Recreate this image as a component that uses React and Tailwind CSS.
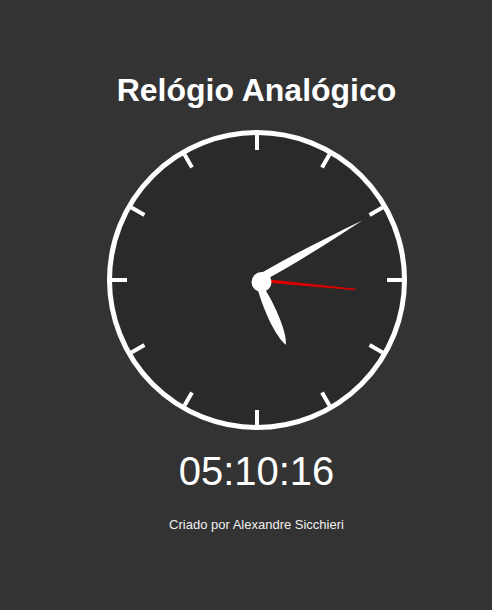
import React from "react";

const TICKS = Array.from({ length: 12 }, (_, i) => i * 30);

const ClockFace = ({ hour = 156, minute = 60.5, second = 95.5 }) => {
  return (
    <svg width="300" height="300" viewBox="0 0 300 300" className="block">
      <circle cx="150" cy="150" r="147.5" fill="#2a2a2a" stroke="#ffffff" strokeWidth="5" />
      {TICKS.map((deg) => (
        <line
          key={deg}
          x1="150"
          y1="5"
          x2="150"
          y2="20"
          stroke="#ffffff"
          strokeWidth="4"
          transform={`rotate(${deg} 150 150)`}
        />
      ))}

      {/* hour */}
      <path
        d="M -3,-8 C -6.5,-30 -6,-60 0,-71 C 6,-60 6.5,-30 3,-8 Z"
        fill="#ffffff"
        transform={`translate(150 150) rotate(${hour})`}
      />
      {/* minute */}
      <path
        d="M -4,-8 C -4.5,-45 -2.5,-85 0,-121 C 2.5,-85 4.5,-45 4,-8 Z"
        fill="#ffffff"
        transform={`translate(150 150) rotate(${minute})`}
      />
      {/* second */}
      <path
        d="M -1.8,-8 L -0.8,-99 L 0.8,-99 L 1.8,-8 Z"
        fill="#dd0000"
        transform={`translate(150 150) rotate(${second})`}
      />

      <circle cx="154.5" cy="152" r="10" fill="#ffffff" />
    </svg>
  );
};

export default function App() {
  return (
    <div
      className="flex min-h-screen w-full flex-col items-center bg-[#333333] pl-[21px] pt-[72px] text-white"
      style={{ fontFamily: '"Liberation Sans", Arial, sans-serif' }}
    >
      <h1 className="text-[32px] font-bold leading-[37px]">Relógio Analógico</h1>

      <div className="mt-[21px] h-[300px] w-[300px]">
        <ClockFace />
      </div>

      <div className="mt-[18px] text-[40px] leading-[46px]">05:10:16</div>

      <p className="mt-[23px] text-[13px] leading-[16px] text-[#f0f0f0]">
        Criado por Alexandre Sicchieri
      </p>
    </div>
  );
}
